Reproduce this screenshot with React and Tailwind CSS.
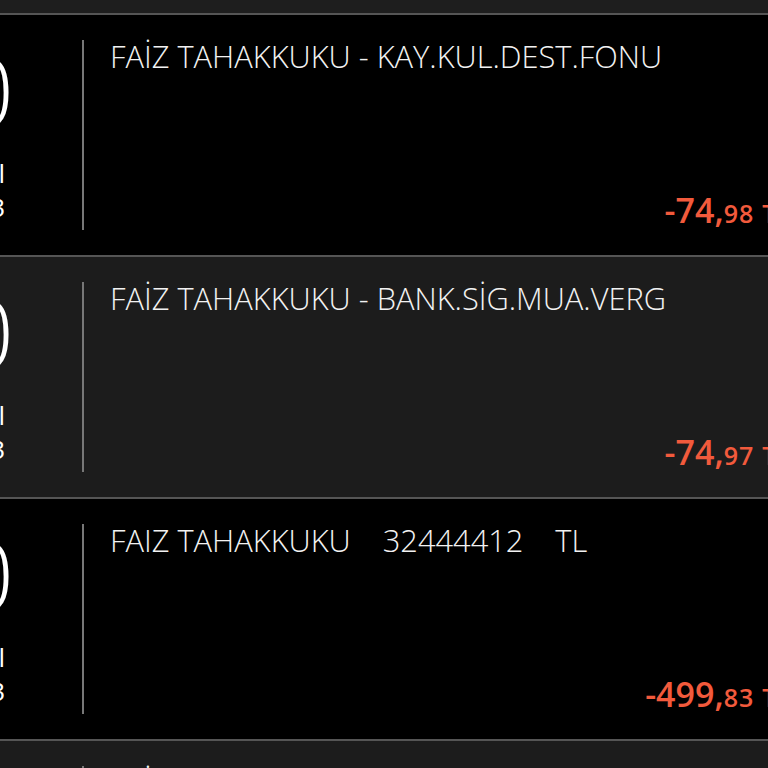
import React from "react";

const rows = [
  { day: "30", month: "Eyl", year: "2023", title: "FAİZ TAHAKKUKU - KAY.KUL.DEST.FONU", lira: "-74,", kurus: "98", bg: "bg-black" },
  { day: "30", month: "Eyl", year: "2023", title: "FAİZ TAHAKKUKU - BANK.SİG.MUA.VERG", lira: "-74,", kurus: "97", bg: "bg-[#1c1c1c]" },
  { day: "30", month: "Eyl", year: "2023", title: "FAIZ TAHAKKUKU    32444412    TL", lira: "-499,", kurus: "83", bg: "bg-black" },
  { day: "30", month: "Eyl", year: "2023", title: "FAİZ TAHAKKUKU", lira: "-12,", kurus: "40", bg: "bg-[#1c1c1c]" },
];

function Row({ r }) {
  return (
    <div className={`flex h-[242px] shrink-0 border-b-2 border-[#555] py-[25px] ${r.bg}`}>
      <div className="w-[82px] shrink-0 flex flex-col items-end pr-[68px] text-white">
        <span className="mt-[2px] text-[96px] font-light leading-none whitespace-nowrap">{r.day}</span>
        <span className="mt-[22px] mr-[9px] text-[26px] leading-none whitespace-nowrap">{r.month}</span>
        <span className="mt-[8px] mr-[9px] text-[26px] leading-none whitespace-nowrap">{r.year}</span>
      </div>
      <div className="w-[2px] shrink-0 bg-[#777]" />
      <div className="flex-1 flex flex-col justify-between pl-[26px] -mr-[22px]">
        <p className="mt-[-5px] text-[30.8px] font-light leading-[42px] text-[#f2f2f2] whitespace-pre">{r.title}</p>
        <p className="self-end whitespace-nowrap text-[#f25a3c] font-semibold leading-none mb-[3px]">
          <span className="text-[34px]">{r.lira}</span>
          <span className="text-[25px] tracking-[1px]">{r.kurus}</span>
          <span className="text-[25px] ml-[8px]">TL</span>
        </p>
      </div>
    </div>
  );
}

export default function App() {
  return (
    <div className="w-[768px] h-[768px] overflow-hidden bg-[#1c1c1c] flex flex-col" style={{ fontFamily: '"Open Sans", "Noto Sans", sans-serif' }}>
      <div className="h-[15px] shrink-0 bg-[#1e1e1e] border-b-2 border-[#555]" />
      {rows.map((r, i) => (
        <Row key={i} r={r} />
      ))}
    </div>
  );
}
